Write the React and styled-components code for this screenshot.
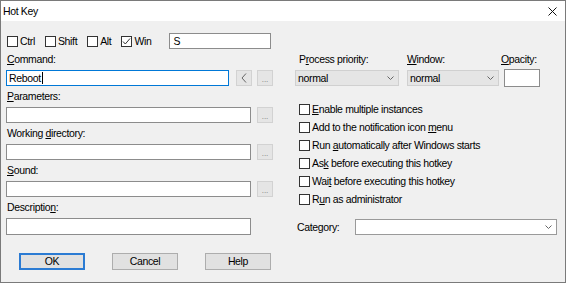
import React from 'react';
import styled, { createGlobalStyle } from 'styled-components';

const Global = createGlobalStyle`
  html, body { margin: 0; padding: 0; background: #ffffff; }
  body { font-family: "Liberation Sans", Arial, sans-serif; }
`;

const Window = styled.div`
  width: 566px;
  height: 283px;
  box-sizing: border-box;
  border: 1px solid #7a7a7a;
  display: flex;
  flex-direction: column;
  font-family: "Liberation Sans", Arial, sans-serif;
  font-size: 10.5px;
  letter-spacing: -0.35px;
  color: #000;
  background: #f0f0f0;
`;

const TitleBar = styled.div`
  height: 20px;
  flex: none;
  background: #ffffff;
  display: flex;
  align-items: center;
  justify-content: space-between;
  padding: 0 8px 0 2px;
`;

const Title = styled.span`
  line-height: 20px;
`;

const Body = styled.div`
  flex: 1;
  padding: 12px 0 0 5px;
  display: flex;
  flex-direction: column;
`;

const ModifierRow = styled.div`
  display: flex;
  align-items: center;
  height: 16px;
  padding-left: 1px;
  gap: 10px;
`;

const CheckItem = styled.label`
  display: flex;
  align-items: center;
  gap: 2px;
  height: ${(p) => p.$h || 16}px;
  white-space: nowrap;
`;

const Box = styled.span`
  width: 11px;
  height: 11px;
  box-sizing: border-box;
  border: 1px solid #333333;
  background: #ffffff;
  display: flex;
  align-items: center;
  justify-content: center;
  flex: none;
`;

const KeyBox = styled.div`
  margin-left: 8px;
  width: 102px;
  height: 16px;
  box-sizing: border-box;
  border: 1px solid #8c8c8c;
  background: #fff;
  padding-left: 3px;
  line-height: 14px;
`;

const Columns = styled.div`
  display: flex;
  margin-top: 4px;
`;

const LeftCol = styled.div`
  width: 268px;
  display: flex;
  flex-direction: column;
`;

const Fields = styled.div`
  display: flex;
  flex-direction: column;
  gap: 4px;
`;

const Field = styled.div`
  display: flex;
  flex-direction: column;
`;

const Label = styled.div`
  line-height: 13px;
  height: 13px;
  margin-bottom: 4px;
  padding-left: ${(p) => p.$pl ?? 1}px;
  white-space: nowrap;
`;

const FieldRow = styled.div`
  display: flex;
  align-items: center;
`;

const TextBox = styled.div`
  width: ${(p) => p.$w}px;
  height: ${(p) => p.$h || 16}px;
  box-sizing: border-box;
  border: 1px solid ${(p) => (p.$focus ? '#0078d7' : '#8c8c8c')};
  background: #ffffff;
  padding-left: 2px;
  line-height: 14px;
  display: flex;
  align-items: center;
  margin-left: ${(p) => p.$ml || 0}px;
  margin-top: ${(p) => p.$mt || 0}px;
`;

const Caret = styled.span`
  display: inline-block;
  width: 1px;
  height: 12px;
  background: #000;
  margin-left: 1px;
`;

const SmallButton = styled.div`
  width: 16px;
  height: 16px;
  box-sizing: border-box;
  margin-left: ${(p) => p.$ml}px;
  background: #e5e5e5;
  border: 1px solid #d2d2d2;
  display: flex;
  align-items: center;
  justify-content: center;
  color: #777;
  font-size: 8px;
  letter-spacing: 0;
  line-height: 8px;
  padding-top: ${(p) => (p.$dots ? 3 : 0)}px;
`;

const ButtonRow = styled.div`
  display: flex;
  margin-top: 18px;
  padding-left: 13px;
  gap: 27px;
`;

const PushButton = styled.div`
  width: 66px;
  height: 17px;
  box-sizing: border-box;
  background: #e1e1e1;
  border: ${(p) => (p.$default ? '2px solid #2b7bd3' : '1px solid #adadad')};
  display: flex;
  align-items: center;
  justify-content: center;
  line-height: 13px;
`;

const RightCol = styled.div`
  margin-left: 21px;
  width: 264px;
  display: flex;
  flex-direction: column;
`;

const TopRow = styled.div`
  display: flex;
`;

const TopCol = styled.div`
  width: ${(p) => p.$w}px;
  margin-left: ${(p) => p.$ml || 0}px;
  display: flex;
  flex-direction: column;
`;

const Select = styled.div`
  width: ${(p) => p.$w}px;
  height: 16px;
  box-sizing: border-box;
  background: ${(p) => (p.$white ? '#ffffff' : '#e5e5e5')};
  border: 1px solid ${(p) => (p.$white ? '#9a9a9a' : '#d0d0d0')};
  display: flex;
  align-items: center;
  justify-content: space-between;
  padding: 0 4px 0 2px;
  line-height: 14px;
`;

const CheckList = styled.div`
  margin-top: 13px;
  padding-left: 4px;
  display: flex;
  flex-direction: column;
`;

const CategoryRow = styled.div`
  margin-top: 11px;
  display: flex;
  align-items: center;
`;

const CategoryLabel = styled.div`
  width: 60px;
  padding-left: 2px;
  box-sizing: border-box;
`;

const U = styled.span`
  text-decoration: underline;
  text-underline-offset: 1px;
`;

const Chevron = () => (
  <svg width="7" height="4" viewBox="0 0 7 4">
    <polyline points="0.5,0.5 3.5,3.5 6.5,0.5" fill="none" stroke="#666" strokeWidth="1" />
  </svg>
);

const CheckBox = ({ checked }) => (
  <Box>
    {checked && (
      <svg width="9" height="9" viewBox="0 0 9 9">
        <polyline points="1,4.5 3.3,7 8,1.5" fill="none" stroke="#333" strokeWidth="1" />
      </svg>
    )}
  </Box>
);

const CloseIcon = () => (
  <svg width="9" height="9" viewBox="0 0 9 9">
    <path d="M0.5 0.5 L8.5 8.5 M8.5 0.5 L0.5 8.5" stroke="#111" strokeWidth="1" />
  </svg>
);

const LeftArrow = () => (
  <svg width="6" height="10" viewBox="0 0 6 10">
    <polyline points="5,0.5 1,5 5,9.5" fill="none" stroke="#666" strokeWidth="1" />
  </svg>
);

const options = [
  [<><U>E</U>nable multiple instances</>],
  [<>Add to the notification icon <U>m</U>enu</>],
  [<>Run <U>a</U>utomatically after Windows starts</>],
  [<>As<U>k</U> before executing this hotkey</>],
  [<>Wai<U>t</U> before executing this hotkey</>],
  [<>R<U>u</U>n as administrator</>],
];

export default function App() {
  return (
    <>
      <Global />
      <Window>
        <TitleBar>
          <Title>Hot Key</Title>
          <CloseIcon />
        </TitleBar>
        <Body>
          <ModifierRow>
            <CheckItem><CheckBox />Ctrl</CheckItem>
            <CheckItem><CheckBox />Shift</CheckItem>
            <CheckItem><CheckBox />Alt</CheckItem>
            <CheckItem><CheckBox checked />Win</CheckItem>
            <KeyBox>S</KeyBox>
          </ModifierRow>
          <Columns>
            <LeftCol>
              <Fields>
                <Field>
                  <Label><U>C</U>ommand:</Label>
                  <FieldRow>
                    <TextBox $w={223} $focus>Reboot<Caret /></TextBox>
                    <SmallButton $ml={7}><LeftArrow /></SmallButton>
                    <SmallButton $ml={5} $dots>...</SmallButton>
                  </FieldRow>
                </Field>
                <Field>
                  <Label><U>P</U>arameters:</Label>
                  <FieldRow>
                    <TextBox $w={245} />
                    <SmallButton $ml={6} $dots>...</SmallButton>
                  </FieldRow>
                </Field>
                <Field>
                  <Label>Working <U>d</U>irectory:</Label>
                  <FieldRow>
                    <TextBox $w={245} />
                    <SmallButton $ml={6} $dots>...</SmallButton>
                  </FieldRow>
                </Field>
                <Field>
                  <Label><U>S</U>ound:</Label>
                  <FieldRow>
                    <TextBox $w={245} />
                    <SmallButton $ml={6} $dots>...</SmallButton>
                  </FieldRow>
                </Field>
                <Field>
                  <Label>Descriptio<U>n</U>:</Label>
                  <FieldRow>
                    <TextBox $w={245} $h={17} />
                  </FieldRow>
                </Field>
              </Fields>
              <ButtonRow>
                <PushButton $default>OK</PushButton>
                <PushButton>Cancel</PushButton>
                <PushButton>Help</PushButton>
              </ButtonRow>
            </LeftCol>
            <RightCol>
              <TopRow>
                <TopCol $w={104}>
                  <Label $pl={4}>P<U>r</U>ocess priority:</Label>
                  <Select $w={104}>normal<Chevron /></Select>
                </TopCol>
                <TopCol $w={92} $ml={8}>
                  <Label $pl={0}><U>W</U>indow:</Label>
                  <Select $w={92}>normal<Chevron /></Select>
                </TopCol>
                <TopCol $w={39} $ml={2}>
                  <Label $pl={0}><U>O</U>pacity:</Label>
                  <TextBox $w={36} $h={18} $ml={3} $mt={-1} />
                </TopCol>
              </TopRow>
              <CheckList>
                {options.map(([text], i) => (
                  <CheckItem key={i} $h={18}>
                    <CheckBox />
                    <span>{text}</span>
                  </CheckItem>
                ))}
              </CheckList>
              <CategoryRow>
                <CategoryLabel>Category:</CategoryLabel>
                <Select $w={202} $white>
                  <span />
                  <Chevron />
                </Select>
              </CategoryRow>
            </RightCol>
          </Columns>
        </Body>
      </Window>
    </>
  );
}
